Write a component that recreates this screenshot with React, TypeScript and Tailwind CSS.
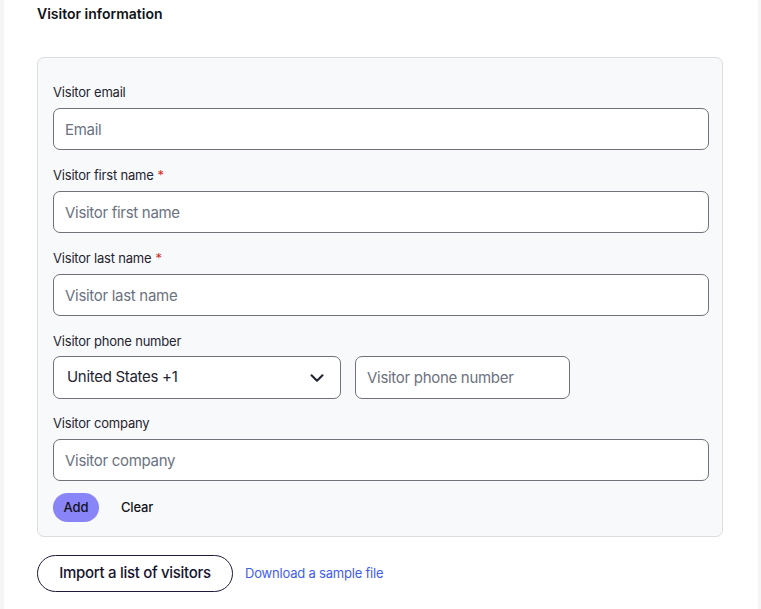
import { ChevronDown } from "lucide-react";

// Simple visitor form, one field per row
const FIELDS = [
  { label: "Visitor email", placeholder: "Email", required: false },
  { label: "Visitor first name", placeholder: "Visitor first name", required: true },
  { label: "Visitor last name", placeholder: "Visitor last name", required: true },
];

const Label = ({ text, required, className = "mb-[6px]" }: { text: string; required?: boolean; className?: string }) => (
  <div className={`h-5 text-[13px] leading-5 tracking-[-0.2px] text-[#1f2430] ${className}`}>
    {text}
    {required && <span className="ml-1 text-[#d92d20]">*</span>}
  </div>
);

const TextInput = ({ placeholder, className = "" }: { placeholder: string; className?: string }) => (
  <input
    className={`h-[42px] rounded-[7px] border border-[#71717a] bg-white px-[11px] text-[15px] tracking-[-0.3px] text-[#1f2430] outline-none placeholder:text-[#6b7280] ${className}`}
    placeholder={placeholder}
  />
);

const App = () => {
  return (
    <div
      className="flex min-h-[609px] bg-[#f5f5f6]"
      style={{ fontFamily: "Inter, 'Noto Sans', sans-serif" }}
    >
      <div className="ml-[4px] w-[754px] bg-white pl-[33px] pt-[4px]">
        <h2 className="h-5 text-[14px] font-semibold leading-5 text-[#111318]">Visitor information</h2>

        <div className="mt-[33px] flex w-[686px] flex-col rounded-[7px] border border-[#dcdde0] bg-[#f8f9fb] px-[15px] pb-[14px] pt-[24px]">
          {FIELDS.map((f) => (
            <div key={f.label} className="mb-[15px] flex flex-col">
              <Label text={f.label} required={f.required} />
              <TextInput placeholder={f.placeholder} className="w-[656px]" />
            </div>
          ))}

          <div className="mb-[14px] flex flex-col">
            <Label text="Visitor phone number" className="mb-[5px]" />
            <div className="flex gap-[14px]">
              <div className="flex h-[43px] w-[288px] items-center justify-between rounded-[7px] border border-[#71717a] bg-white pl-[13px] pr-[12px] text-[15px] tracking-[-0.3px] text-[#1f2430]">
                <span>United States +1</span>
                <ChevronDown size={22} strokeWidth={2.3} className="text-[#1f2430]" />
              </div>
              <TextInput placeholder="Visitor phone number" className="h-[43px] w-[215px]" />
            </div>
          </div>

          <div className="mb-[12px] flex flex-col">
            <Label text="Visitor company" />
            <TextInput placeholder="Visitor company" className="w-[656px]" />
          </div>

          <div className="flex items-center gap-[22px]">
            <button className="h-[29px] w-[46px] rounded-full bg-[#8a84f9] text-[13px] font-medium text-[#111318]">
              Add
            </button>
            <button className="text-[13px] font-medium tracking-[-0.2px] text-[#111318]">Clear</button>
          </div>
        </div>

        <div className="mt-[18px] flex items-center gap-[12px]">
          <button className="h-[37px] w-[196px] rounded-full border border-[#1d1b3a] bg-white text-[15px] font-medium tracking-[-0.3px] text-[#16142e]">
            Import a list of visitors
          </button>
          <a className="text-[13px] tracking-[-0.2px] text-[#3f5ef0]">Download a sample file</a>
        </div>
      </div>
    </div>
  );
};

export default App;
